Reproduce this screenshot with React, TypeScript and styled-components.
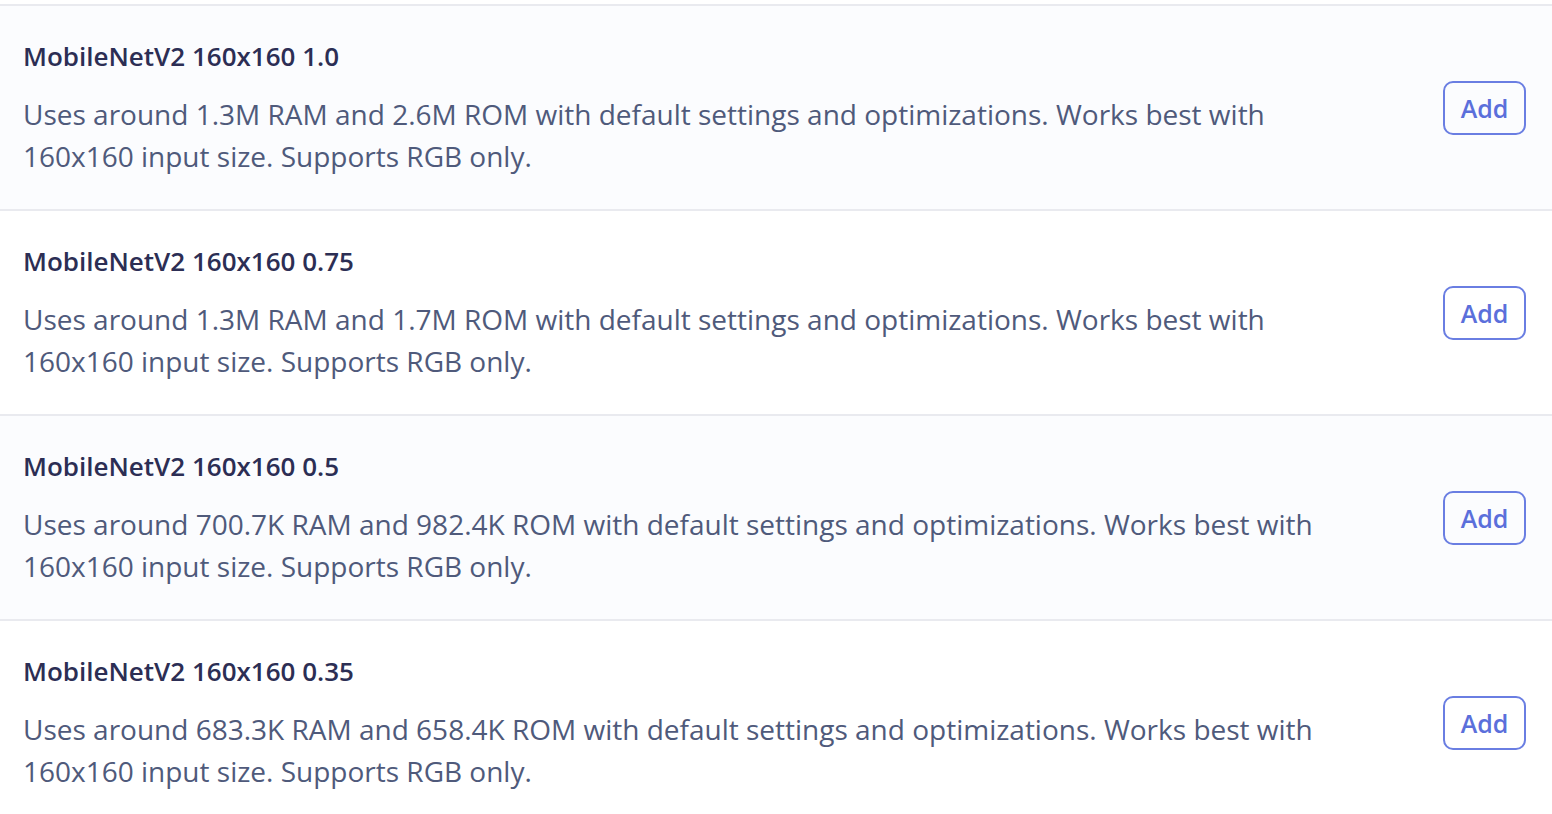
import React from "react";
import styled, { createGlobalStyle } from "styled-components";

const GlobalStyle = createGlobalStyle`
    html, body {
        margin: 0;
        padding: 0;
        background: #ffffff;
        font-family: "Open Sans", "Noto Sans", sans-serif;
    }
`;

const List = styled.div`
    display: flex;
    flex-direction: column;
    padding-top: 4px;
`;

const Row = styled.div<{ $shaded: boolean }>`
    display: flex;
    align-items: center;
    gap: 80px;
    height: 205px;
    box-sizing: border-box;
    padding: 0 26px 0 23px;
    border-top: 2px solid #e9eaef;
    background-color: ${(p) => (p.$shaded ? "#fbfcfe" : "#ffffff")};
`;

const Info = styled.div`
    flex: 1;
    display: flex;
    flex-direction: column;
    gap: 20px;
`;

const Title = styled.div`
    font-size: 26px;
    line-height: 34px;
    font-weight: 600;
    color: #2c2e54;
`;

const Description = styled.p`
    margin: 0;
    font-size: 28px;
    line-height: 42px;
    color: #4f5a7b;
`;

const AddButton = styled.button`
    flex: none;
    width: 83px;
    height: 54px;
    box-sizing: border-box;
    border: 2px solid #6a7ee2;
    border-radius: 10px;
    background: transparent;
    color: #5b6fdb;
    font-family: inherit;
    font-size: 25px;
    font-weight: 600;
    cursor: pointer;
`;

const models = [
    { name: "MobileNetV2 160x160 1.0", ram: "1.3M", rom: "2.6M" },
    { name: "MobileNetV2 160x160 0.75", ram: "1.3M", rom: "1.7M" },
    { name: "MobileNetV2 160x160 0.5", ram: "700.7K", rom: "982.4K" },
    { name: "MobileNetV2 160x160 0.35", ram: "683.3K", rom: "658.4K" },
];

export default function App() {
    return (
        <>
            <GlobalStyle />
            <List>
                {models.map((m, i) => (
                    <Row key={m.name} $shaded={i % 2 === 0}>
                        <Info>
                            <Title>{m.name}</Title>
                            <Description>
                                Uses around {m.ram} RAM and {m.rom} ROM with default settings and
                                optimizations. Works best with 160x160 input size. Supports RGB only.
                            </Description>
                        </Info>
                        <AddButton>Add</AddButton>
                    </Row>
                ))}
            </List>
        </>
    );
}
